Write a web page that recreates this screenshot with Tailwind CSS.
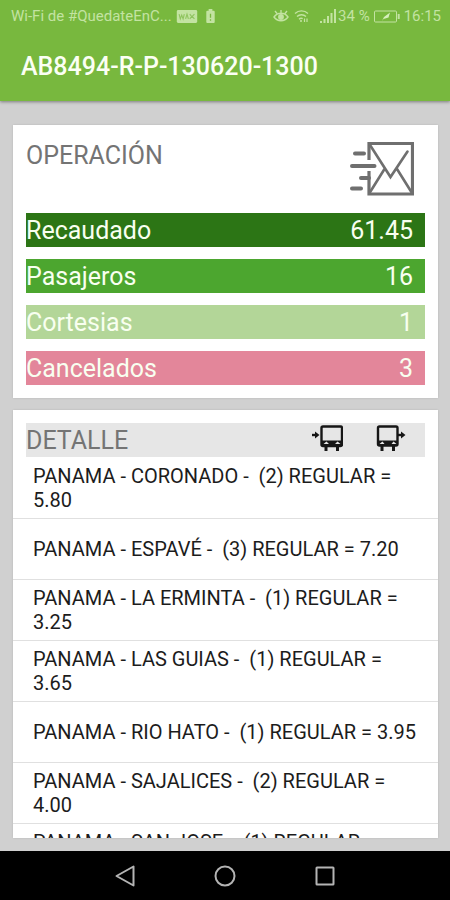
<!DOCTYPE html>
<html lang="es">
<head>
<meta charset="utf-8">
<meta name="viewport" content="width=device-width, initial-scale=1">
<title>AB8494-R-P-130620-1300</title>
<script src="https://cdn.jsdelivr.net/npm/@tailwindcss/browser@4"></script>
</head>
<body class="flex h-dvh flex-col bg-[#d0d0d0] font-[Roboto,sans-serif]">
<header class="relative shrink-0 bg-[#78b83e] shadow-[0_1px_3px_rgba(0,0,0,0.4)]">
  <div class="flex h-8 items-center pl-[11px] pr-[9px] text-[15px] text-[#c3e3a2]">
    <span>Wi-Fi de #QuedateEnC...</span>
    <svg class="ml-1 h-[13px] w-[22px]" viewBox="0 0 22 14" aria-hidden="true"><rect width="22" height="14" rx="1.5" fill="#c3e3a2"/><path d="M2.500 4.500l1.300 5 1.500-4 1.500 4 1.300-5M9.500 9.500l1.500-5 1.500 5M14 4.500l2 2.500-2 2.500M19 4.500l-2.500 2.500 2.500 2.500" fill="none" stroke="#8fc45f" stroke-width="1.200"/></svg>
    <svg class="ml-2 h-[14px] w-[9px]" viewBox="0 0 9 15" aria-hidden="true"><path d="M2.500 0h4v2H8a1 1 0 0 1 1 1v11a1 1 0 0 1-1 1H1a1 1 0 0 1-1-1V3a1 1 0 0 1 1-1h1.500z" fill="#c3e3a2"/><path d="M4.500 5v4.500M4.500 11v1.500" stroke="#78b83e" stroke-width="1.400"/></svg>
    <div class="ml-auto flex items-center">
      <svg class="h-[14px] w-4" viewBox="0 0 16 14" fill="none" stroke="#c3e3a2" stroke-width="1.400" aria-hidden="true"><path d="M1 8c3.500-5 10.500-5 14 0-3.500 5-10.500 5-14 0zM2 2l2 2.500M14 2l-2 2.500M8 1v3"/><circle cx="8" cy="8" r="2.200" fill="#c3e3a2"/></svg>
      <svg class="ml-[5px] h-[14px] w-[15px]" viewBox="0 0 15 14" fill="none" stroke="#c3e3a2" stroke-width="1.400" aria-hidden="true"><path d="M1 4.500c3.700-3.500 9.300-3.500 13 0M3 7.500c2.500-2.300 6.500-2.300 9 0M5 10.200c1.200-1 2.500-1.200 3.700-.5"/><circle cx="7" cy="12" r="1" fill="#c3e3a2" stroke="none"/><path d="M10.500 9.500v3.500M13 9.500v3.500" stroke-width="1.200"/></svg>
      <svg class="ml-[11px] h-[14px] w-4" viewBox="0 0 16 14" fill="#c3e3a2" aria-hidden="true"><path d="M0 12h2v2H0zM3.500 10h2v4h-2zM7 7h2v7H7zM10.500 4h2v10h-2zM14 0h2v14h-2z"/></svg>
      <span class="ml-[2px]">34 %</span>
      <svg class="ml-1 h-[13px] w-[26px]" viewBox="0 0 26 13" fill="none" stroke="#c3e3a2" aria-hidden="true"><rect x=".5" y="1" width="22" height="11" rx="1"/><path d="M24.700 4v5" stroke-width="2"/><path d="M8 11l2-4 6-4.500-1.500 5L9.500 9z" fill="#d6efbd" stroke="none"/></svg>
      <span class="ml-1">16:15</span>
    </div>
  </div>
  <h1 class="flex h-[69px] items-center pl-[21px] text-[25px] font-medium text-[#fbfff4]">AB8494-R-P-130620-1300</h1>
</header>

<main class="flex min-h-0 flex-1 flex-col gap-3 pl-[13px] pr-3 pt-6 pb-[13px] text-[25px]">
  <section class="shrink-0 bg-white px-[13px] pb-[13px] shadow-[0_0_2px_rgba(0,0,0,0.12)]">
    <div class="flex h-[88px] items-start justify-between pt-[14px] pr-[11px]">
      <h2 class="text-[#747474] leading-[34px]">OPERACIÓN</h2>
      <button type="button" aria-label="Enviar" class="mt-[2px]">
        <svg class="h-14 w-16" viewBox="350 141 64 56" fill="none" stroke="#6f6f6f" stroke-width="3.200"><path d="M369 160v-16.500h43.500v50.500H369v-23"/><path d="M370 145l20.500 32 17-25.500M384.500 169l-15 24M397 169l15 24" stroke-width="2.600" stroke-linecap="round"/><path d="M355 153.500h9M352 166h22.500M361 178h8M352 188.500h9" stroke-width="4" stroke-linecap="round"/></svg>
      </button>
    </div>
    <dl class="flex flex-col gap-3 leading-8 text-[#f8fff0]">
      <div class="flex justify-between bg-[#2c7515] pr-3 pt-[2px]"><dt>Recaudado</dt><dd>61.45</dd></div>
      <div class="flex justify-between bg-[#4ca62f] pr-3 pt-[2px]"><dt>Pasajeros</dt><dd>16</dd></div>
      <div class="flex justify-between bg-[#b3d698] pr-3 pt-[2px]"><dt>Cortesias</dt><dd>1</dd></div>
      <div class="flex justify-between bg-[#e3869a] pr-3 pt-[2px]"><dt>Cancelados</dt><dd>3</dd></div>
    </dl>
  </section>

  <section class="flex min-h-0 flex-1 flex-col bg-white pt-[13px] shadow-[0_0_2px_rgba(0,0,0,0.12)]">
    <div class="mx-[13px] flex h-[34px] shrink-0 items-center bg-[#e6e6e6] pr-[18px]">
      <h2 class="mr-auto pt-[2px] text-[#747474]">DETALLE</h2>
      <button type="button" aria-label="Subidas" class="mr-8">
        <svg class="-mt-1 h-7 w-8" viewBox="312 424 32 28" fill="none" stroke="#161616"><rect x="322.500" y="426.500" width="20.500" height="19.500" rx="1.500" stroke-width="2.400"/><path d="M323 440.500h20v5.500h-20z" fill="#161616" stroke="none"/><path d="M324.500 444l3-2.500 2.500 2.500zM336 444l2.500-2.500 3 2.500z" fill="#e6e6e6" stroke="none"/><path d="M327 446v5M338.500 446v5" stroke-width="3"/><path d="M313 435h4" stroke-width="2.400"/><path d="M316 431.500l4.500 3.500-4.500 3.500z" fill="#161616" stroke="none"/></svg>
      </button>
      <button type="button" aria-label="Bajadas">
        <svg class="-mt-1 h-7 w-8" viewBox="376 424 32 28" fill="none" stroke="#161616"><rect x="379" y="426.500" width="19.500" height="19" rx="1.500" stroke-width="2.400"/><path d="M379 440.500h20v5h-20z" fill="#161616" stroke="none"/><path d="M380.500 444l3-2.500 2 2.500zM392.500 444l2-2.500 3 2.500z" fill="#e6e6e6" stroke="none"/><path d="M383 446v5M394.500 446v5" stroke-width="3"/><path d="M398 435h5" stroke-width="2.400"/><path d="M402 431.500l4.500 3.500-4.500 3.500z" fill="#161616" stroke="none"/></svg>
      </button>
    </div>
    <ul class="min-h-0 flex-1 overflow-y-auto pt-px text-xl leading-6 text-[#1c1c1c] [scrollbar-width:none]">
      <li class="flex h-[61px] items-center border-b border-[#e0e0e0] px-5">PANAMA - CORONADO -&nbsp; (2) REGULAR = 5.80</li>
      <li class="flex h-[61px] items-center border-b border-[#e0e0e0] px-5">PANAMA - ESPAVÉ -&nbsp; (3) REGULAR = 7.20</li>
      <li class="flex h-[61px] items-center border-b border-[#e0e0e0] px-5">PANAMA - LA ERMINTA -&nbsp; (1) REGULAR = 3.25</li>
      <li class="flex h-[61px] items-center border-b border-[#e0e0e0] px-5">PANAMA - LAS GUIAS -&nbsp; (1) REGULAR = 3.65</li>
      <li class="flex h-[61px] items-center border-b border-[#e0e0e0] px-5">PANAMA - RIO HATO -&nbsp; (1) REGULAR = 3.95</li>
      <li class="flex h-[61px] items-center border-b border-[#e0e0e0] px-5">PANAMA - SAJALICES -&nbsp; (2) REGULAR = 4.00</li>
      <li class="flex h-[61px] items-center border-b border-[#e0e0e0] px-5">PANAMA - SAN JOSE -&nbsp; (1) REGULAR = 3.50</li>
    </ul>
  </section>
</main>

<nav class="flex h-[49px] shrink-0 items-center justify-center gap-[76px] bg-black" aria-label="Sistema">
  <button type="button" aria-label="Atrás"><svg class="size-6" viewBox="0 0 24 24" fill="none" stroke="#b4b4b4" stroke-width="2" stroke-linejoin="round"><path d="M3.500 12L20.500 2.500v19z"/></svg></button>
  <button type="button" aria-label="Inicio"><svg class="size-6" viewBox="0 0 24 24" fill="none" stroke="#b4b4b4" stroke-width="2"><circle cx="12" cy="12" r="9.500"/></svg></button>
  <button type="button" aria-label="Recientes"><svg class="size-6" viewBox="0 0 24 24" fill="none" stroke="#b4b4b4" stroke-width="2"><rect x="3.500" y="3.500" width="17" height="17" rx=".5"/></svg></button>
</nav>
</body>
</html>
